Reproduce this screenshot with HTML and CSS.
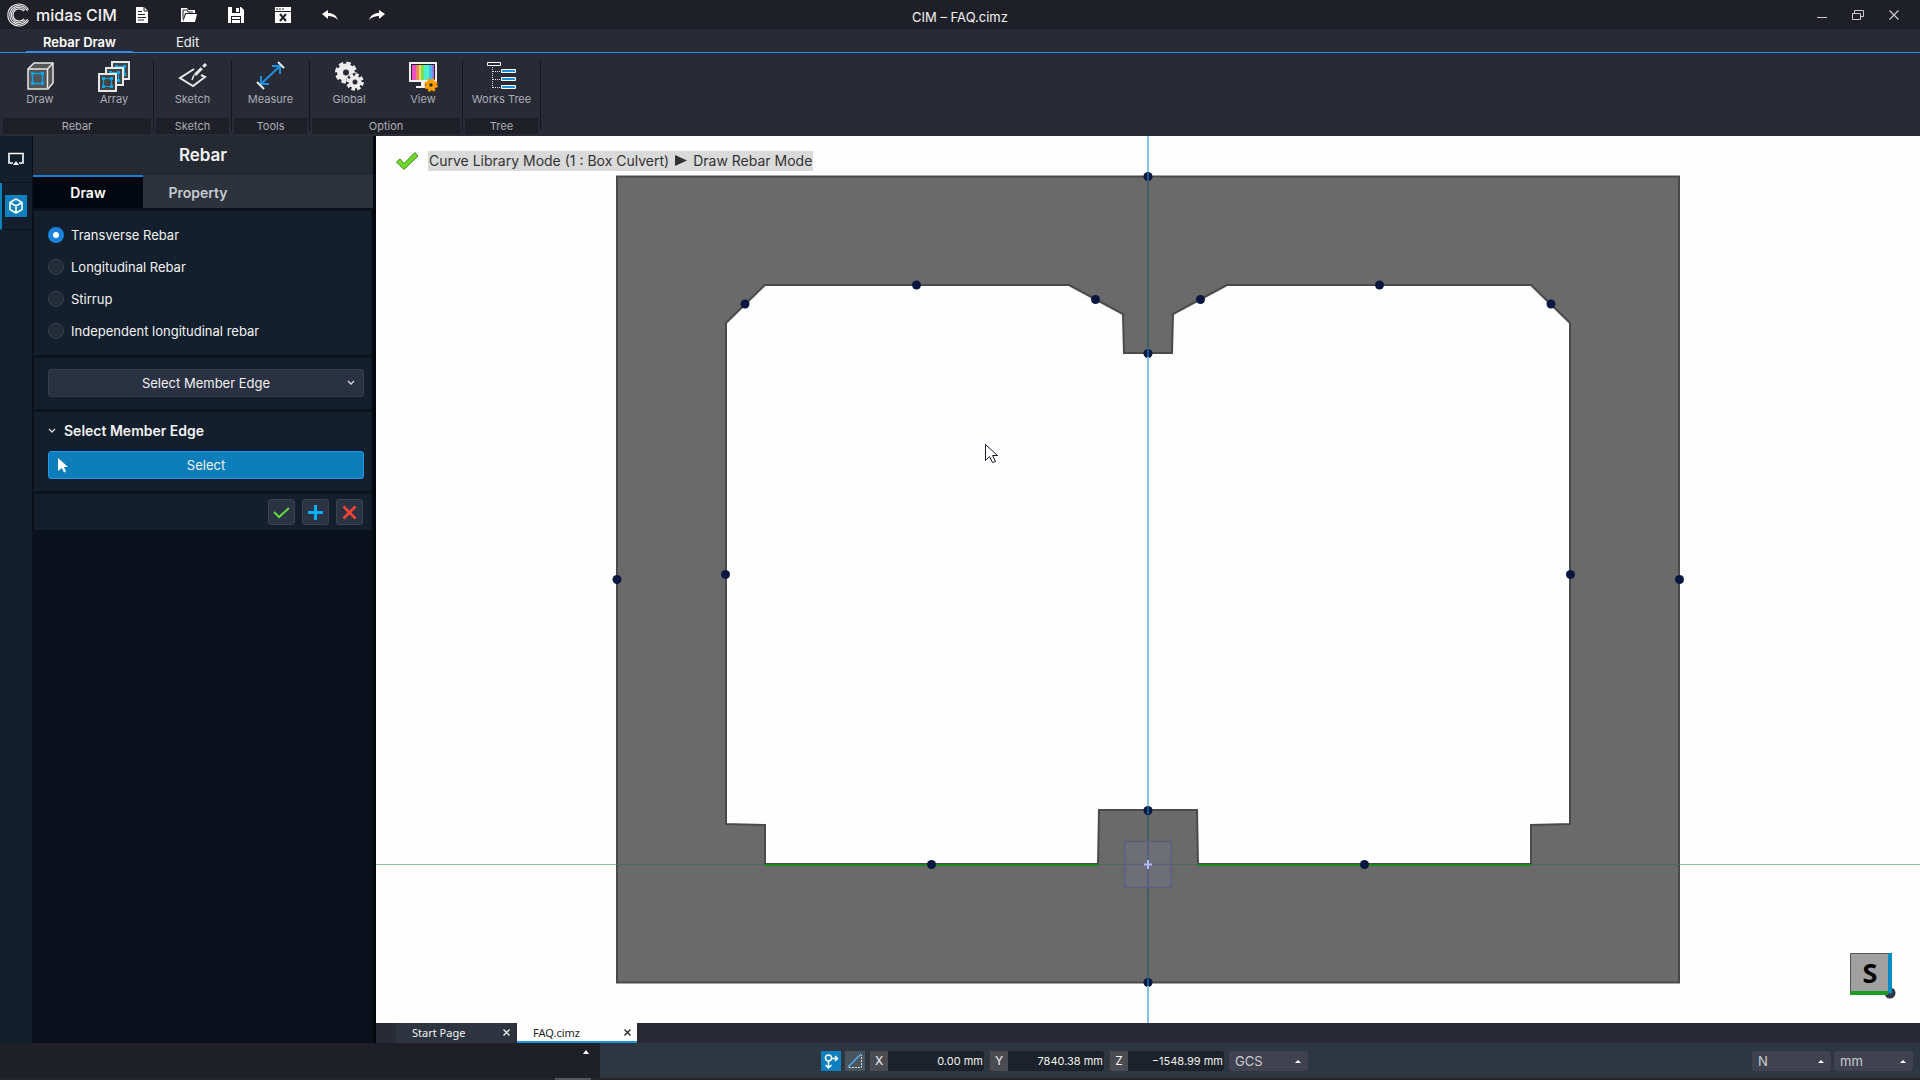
FILE: index.html
```html
<!DOCTYPE html>
<html lang="en">
<head>
    <meta charset="UTF-8">
    <title>CIM – FAQ.cimz</title>
    <link rel="stylesheet" href="styles.css">
</head>
<body>
    <header class="titlebar">
        <div class="brand">
            <svg width="24" height="24" viewBox="0 0 24 24" fill="none" stroke="#f0f0f0">
                <path d="M21.500 6.700A11 11 0 1 0 21.500 17.300" stroke-width="1.100"/>
                <path d="M20.500 8A9.300 9.300 0 1 0 20.500 16" stroke-width="1.100"/>
                <path d="M18.100 7.200A7.700 7.700 0 1 0 18.100 16.800" stroke-width="1.100"/>
                <path d="M16.800 8.200A6.100 6.100 0 1 0 16.800 15.800" stroke-width="1.200"/>
            </svg>
            <span>midas CIM</span>
        </div>
        <div class="quick">
            <button class="quick-btn" aria-label="New">
                <svg width="16" height="16" viewBox="0 0 16 16"><path d="M2 0h8l4 4v12H2z" fill="#fff"/><path d="M10 0v4h4M4 4.500h4M4 7.500h7M4 10.500h8M4 13h6" stroke="#1f2027" fill="none"/></svg>
            </button>
            <button class="quick-btn" aria-label="Open">
                <svg width="16" height="16" viewBox="0 0 16 16"><path d="M0 1h6l1 2h7v3H4L2 13V15H0z" fill="#fff"/><path d="M5 7h11l-2 8H2z" fill="#fff"/><path d="M2 12V3h4l1 2h5" stroke="#1f2027" fill="none"/></svg>
            </button>
            <button class="quick-btn" aria-label="Save">
                <svg width="16" height="16" viewBox="0 0 16 16"><path d="M0 0h13l3 3v13H0z" fill="#fff"/><path d="M4 0h8v6H4zM3 9h10v7H3z" fill="#1f2027"/><path d="M8 1h3v4H8zM4 10h8v2H4zM4 13h8v3H4z" fill="#fff"/></svg>
            </button>
            <button class="quick-btn" aria-label="Close file">
                <svg width="16" height="16" viewBox="0 0 16 16"><path d="M0 0h16v16H0z" fill="#fff"/><path d="M1 2h2M4 2h2M7 2h2M0 4.500h16" stroke="#1f2027"/><path d="M5 7l6 7M11 7l-6 7" stroke="#1f2027" stroke-width="2"/></svg>
            </button>
            <button class="quick-btn" aria-label="Undo">
                <svg width="16" height="16" viewBox="0 0 16 16"><path d="M0 7l6-4v3c5 0 8 2 10 7-3-3-6-4-10-4v3z" fill="#fff"/></svg>
            </button>
            <button class="quick-btn" aria-label="Redo">
                <svg width="16" height="16" viewBox="0 0 16 16"><path d="M16 7l-6-4v3c-5 0-8 2-10 7 3-3 6-4 10-4v3z" fill="#fff"/></svg>
            </button>
        </div>
        <div class="doc-title">CIM – FAQ.cimz</div>
        <div class="window-btns">
            <button class="window-btn" aria-label="Minimize"><svg width="12" height="12" viewBox="0 0 12 12"><path d="M1 8.500h10" stroke="#ccc"/></svg></button>
            <button class="window-btn" aria-label="Restore"><svg width="12" height="12" viewBox="0 0 12 12" fill="none" stroke="#ccc"><path d="M.5 4.500h8v6h-8zM2.500 4.500v-3h9v6h-3"/></svg></button>
            <button class="window-btn" aria-label="Close"><svg width="12" height="12" viewBox="0 0 12 12"><path d="M1.500 1.500l9 9M10.500 1.500l-9 9" stroke="#ccc" stroke-width="1.200"/></svg></button>
        </div>
    </header>

    <nav class="menu">
        <a class="menu-item active" href="#">Rebar Draw</a>
        <a class="menu-item" href="#">Edit</a>
    </nav>

    <div class="ribbon">
        <section class="group">
            <div class="tools">
                <button class="tool">
                    <svg width="32" height="32" viewBox="0 0 32 32"><path d="M4 9L10 3H29V23L24 29H4z" fill="#555" stroke="#e8e8e8" stroke-width="1.500"/><path d="M4 9H23.500V28M23.500 9L29 3" fill="none" stroke="#e8e8e8" stroke-width="1.500"/><path d="M8.500 13.500h10v10h-10z" fill="none" stroke="#0aa5f0" stroke-width="1.500"/><path d="M7 12h3v3H7zM17 12h3v3h-3zM7 22h3v3H7zM17 22h3v3h-3z" fill="#0aa5f0"/></svg>
                    <span>Draw</span>
                </button>
                <button class="tool">
                    <svg width="32" height="32" viewBox="0 0 32 32">
                        <g id="plate"><path d="M14 2h17v17H14z" fill="#444" stroke="#e8e8e8" stroke-width="2"/><path d="M18.500 6.500h8v8h-8z" fill="none" stroke="#0aa5f0"/><path d="M17 5h3v3h-3zM25 5h3v3h-3zM17 13h3v3h-3zM25 13h3v3h-3z" fill="#0aa5f0"/></g>
                        <use href="#plate" x="-6" y="6"/>
                        <use href="#plate" x="-13" y="12"/>
                    </svg>
                    <span>Array</span>
                </button>
            </div>
            <h2 class="group-name">Rebar</h2>
        </section>
        <span class="sep"></span>
        <section class="group">
            <div class="tools">
                <button class="tool">
                    <svg width="32" height="32" viewBox="0 0 32 32" fill="none" stroke="#e8e8e8" stroke-width="2"><path d="M17 9L3 18l13 8 12-9-4-2"/><path d="M15 20l2-5" stroke-width="1.500"/><path d="M18 15L29 4" stroke-width="3"/><path d="M24 6l3 3" stroke="#282b35"/></svg>
                    <span>Sketch</span>
                </button>
            </div>
            <h2 class="group-name">Sketch</h2>
        </section>
        <span class="sep"></span>
        <section class="group">
            <div class="tools">
                <button class="tool">
                    <svg width="32" height="32" viewBox="0 0 32 32" fill="none"><path d="M6 24L25 6M6 16v8h8M17 6h8v8" stroke="#1f8fe0" stroke-width="2"/><path d="M2 22l7 7M23 2l6 6" stroke="#e8e8e8" stroke-width="2"/></svg>
                    <span>Measure</span>
                </button>
            </div>
            <h2 class="group-name">Tools</h2>
        </section>
        <span class="sep"></span>
        <section class="group">
            <div class="tools">
                <button class="tool">
                    <svg width="32" height="32" viewBox="0 0 32 32">
                        <g fill="none" stroke="#ececec"><circle cx="13" cy="12.500" r="6" stroke-width="6"/><circle cx="13" cy="12.500" r="9.500" stroke-width="3" stroke-dasharray="4.500 2.960"/></g>
                        <circle cx="22" cy="22" r="9" fill="#282b35"/>
                        <g fill="none" stroke="#ececec"><circle cx="22" cy="22" r="4.500" stroke-width="4"/><circle cx="22" cy="22" r="7.300" stroke-width="3" stroke-dasharray="3.500 2.230"/></g>
                    </svg>
                    <span>Global</span>
                </button>
                <button class="tool">
                    <svg width="32" height="32" viewBox="0 0 32 32">
                        <path d="M3 3h26v18H3z" fill="#222" stroke="#f0f0f0" stroke-width="2"/>
                        <path d="M5 5h4v15H5z" fill="#f04fc8"/><path d="M9 5h3v15H9z" fill="#e88b5c"/><path d="M12 5h2v15h-2z" fill="#f0d860"/><path d="M14 5h3v15h-3z" fill="#79e050"/><path d="M17 5h5v15h-5z" fill="#4ff0cf"/><path d="M22 5h3v15h-3z" fill="#50b8f0"/><path d="M25 5h2v15h-2z" fill="#9b78e8"/>
                        <path d="M14 22h4v4h2v2H9v-2h5z" fill="#f0f0f0"/>
                        <circle cx="24" cy="25" r="3.500" fill="none" stroke="#ffa000" stroke-width="3.500"/><circle cx="24" cy="25" r="5.500" fill="none" stroke="#ffa000" stroke-width="2.500" stroke-dasharray="2.600 1.720"/>
                    </svg>
                    <span>View</span>
                </button>
            </div>
            <h2 class="group-name">Option</h2>
        </section>
        <span class="sep"></span>
        <section class="group">
            <div class="tools">
                <button class="tool">
                    <svg width="32" height="32" viewBox="0 0 32 32" fill="none"><path d="M1.500 2.500h13v3h-13z" stroke="#fff"/><path d="M6.500 7v21M7 11.500h9M7 19.500h9M7 27.500h9" stroke="#ddd" stroke-dasharray="1 1"/><path d="M15.500 9.500h14v3h-14zM15.500 17.500h14v3h-14zM15.500 25.500h14v3h-14z" fill="#1f8fe0" stroke="#fff"/></svg>
                    <span>Works Tree</span>
                </button>
            </div>
            <h2 class="group-name">Tree</h2>
        </section>
        <span class="sep"></span>
    </div>

    <main class="workspace">
        <aside class="rail">
            <button class="rail-btn" aria-label="Display">
                <svg width="18" height="18" viewBox="0 0 18 18"><path d="M6 13H2V3.500h14V13h-4" fill="none" stroke="#fff" stroke-width="1.600"/><path d="M9 11l3 4H6z" fill="#fff"/></svg>
            </button>
            <button class="rail-btn selected" aria-label="Model">
                <svg width="22" height="22" viewBox="0 0 22 22"><path d="M0 0h22v22H0z" fill="#0d80bd"/><path d="M11 4l6 3.500v7L11 18l-6-3.500v-7zM5 7.500l6 3.500 6-3.500M11 11v7" fill="none" stroke="#fff" stroke-width="1.600"/></svg>
            </button>
        </aside>

        <aside class="panel">
            <h1 class="panel-title">Rebar</h1>
            <div class="panel-tabs">
                <button class="panel-tab active">Draw</button>
                <button class="panel-tab">Property</button>
            </div>
            <form class="sections">
                <div class="section radios">
                    <label class="radio"><input type="radio" name="kind" checked>Transverse Rebar</label>
                    <label class="radio"><input type="radio" name="kind">Longitudinal Rebar</label>
                    <label class="radio"><input type="radio" name="kind">Stirrup</label>
                    <label class="radio"><input type="radio" name="kind">Independent longitudinal rebar</label>
                </div>
                <div class="section method">
                    <select class="wide-select" aria-label="Method"><option>Select Member Edge</option></select>
                    <svg class="method-arrow" width="8" height="6" viewBox="0 0 8 6"><path d="M1 1l3 3 3-3" fill="none" stroke="#ddd" stroke-width="1.300"/></svg>
                </div>
                <div class="section edge">
                    <h3 class="section-title">
                        <svg width="8" height="6" viewBox="0 0 8 6"><path d="M1 1l3 3 3-3" fill="none" stroke="#ddd" stroke-width="1.300"/></svg>
                        Select Member Edge
                    </h3>
                    <button type="button" class="select-btn">
                        <svg width="10" height="15" viewBox="0 0 10 15"><path d="M0 0l10 9H6l2 4.500-2 1L4 10l-4 3z" fill="#fff"/></svg>
                        <span>Select</span>
                    </button>
                </div>
                <div class="section actions">
                    <button type="button" class="action" aria-label="OK"><svg width="17" height="17" viewBox="0 0 17 17"><path d="M1 8l5 5L16 4" fill="none" stroke="#5fdc3c" stroke-width="2"/></svg></button>
                    <button type="button" class="action" aria-label="Apply"><svg width="17" height="17" viewBox="0 0 17 17"><path d="M8.500 1v15M1 8.500h15" stroke="#00b0ff" stroke-width="3"/></svg></button>
                    <button type="button" class="action" aria-label="Cancel"><svg width="17" height="17" viewBox="0 0 17 17"><path d="M2.500 2.500l12 12M14.500 2.500l-12 12" stroke="#ff4433" stroke-width="2.500"/></svg></button>
                </div>
            </form>
        </aside>

        <div class="view">
            <div class="canvas">
                <svg class="model" viewBox="376 136 1544 887">
                    <!-- box culvert section -->
                    <path d="M617 176.500H1679V982.500H617z M765 285L726 323V824L765 825V864H1098L1099 810H1197L1198 864H1531V825L1570 824V323L1531 285H1227L1173 314L1172 353H1124L1123 314L1069 285z" fill="#6a6a6a" fill-rule="evenodd" stroke="#4a4a4a" stroke-width="2"/>
                    <path d="M376 864.500H616M1680 864.500H1920" stroke="#8fc0a0"/>
                    <path d="M616 864.500H1680" stroke="#4e6858"/>
                    <path d="M765 865H1098M1198 865H1531" stroke="#188a1c" stroke-width="2"/>
                    <g fill="#0b1740">
                        <circle cx="1148" cy="176.500" r="4.500"/><circle cx="1148" cy="353.500" r="4.500"/>
                        <circle cx="1148" cy="810.500" r="4.500"/><circle cx="1148" cy="982.500" r="4.500"/>
                        <circle cx="916.500" cy="285" r="4.500"/><circle cx="1379.500" cy="285" r="4.500"/>
                        <circle cx="1095.500" cy="299.500" r="4.500"/><circle cx="1200.500" cy="299.500" r="4.500"/>
                        <circle cx="745" cy="304" r="4.500"/><circle cx="1551" cy="304" r="4.500"/>
                        <circle cx="617" cy="579.500" r="4.500"/><circle cx="1679.500" cy="579.500" r="4.500"/>
                        <circle cx="725.500" cy="574.500" r="4.500"/><circle cx="1570.500" cy="574.500" r="4.500"/>
                        <circle cx="931.500" cy="864.500" r="4.500"/><circle cx="1364.500" cy="864.500" r="4.500"/>
                    </g>
                    <path d="M1148 136V176M1148 353V810M1148 982V1023" stroke="#85c4e4" stroke-width="2"/>
                    <path d="M1148 180V348M1148 815V978" stroke="#435d60" stroke-width="2"/>
                    <path d="M1148 172V180M1148 349V357M1148 806V814M1148 978V986" stroke="#165a8c" stroke-width="2"/>
                    <!-- origin -->
                    <path d="M1125 841.500h46v46h-46zM1125 864.500h46M1148 841v46" fill="#8080b0" fill-opacity=".2" stroke="#5c5e80" stroke-width="1.500"/>
                    <path d="M1144 864.500h8M1148 860v9" stroke="#b4b8ff" stroke-width="2"/>
                    <!-- view cube -->
                    <circle cx="1890" cy="993" r="5.500" fill="#2b3648"/>
                    <path d="M1850.500 953.500h40v40h-40z" fill="#a0a0a0" stroke="#555"/>
                    <path d="M1850 993h38" stroke="#1c9a24" stroke-width="4"/>
                    <path d="M1890 953v40" stroke="#058cc4" stroke-width="4"/>
                    <text class="cube-face" x="1870" y="983" text-anchor="middle">S</text>
                    <!-- pointer -->
                    <path d="M985.500 444.500v16l4-4 3 6 3-1-3-6h5z" fill="#fff" stroke="#1c1c30"/>
                </svg>
                <div class="mode">
                    <svg width="24" height="20" viewBox="0 0 24 20"><path d="M1.500 11L5 8l4 4.500L20 1.500 23 5 9 18.500z" fill="#70d82c" stroke="#3f8a1c"/></svg>
                    <span class="mode-text">Curve Library Mode (1 : Box Culvert) <svg width="12" height="11" viewBox="0 0 12 11"><path d="M0 0l12 5.500L0 11z" fill="#333"/></svg> Draw Rebar Mode</span>
                </div>
            </div>
            <div class="doc-tabs">
                <div class="doc-tab"><span>Start Page</span><button class="doc-close" aria-label="Close Start Page"><svg width="7" height="7" viewBox="0 0 7 7"><path d="M.5.5l6 6M6.500.5l-6 6" stroke="currentColor" stroke-width="1.300"/></svg></button></div>
                <div class="doc-tab current"><span>FAQ.cimz</span><button class="doc-close" aria-label="Close FAQ.cimz"><svg width="7" height="7" viewBox="0 0 7 7"><path d="M.5.5l6 6M6.500.5l-6 6" stroke="currentColor" stroke-width="1.300"/></svg></button></div>
            </div>
        </div>
    </main>

    <footer class="status">
        <div class="log"><svg width="6" height="4" viewBox="0 0 6 4"><path d="M3 0l3 4H0z" fill="#fff"/></svg><span class="log-thumb"></span></div>
        <div class="coords">
            <button class="snap on" aria-label="Snap"><svg width="20" height="20" viewBox="0 0 20 20" fill="none" stroke="#fff" stroke-width="1.500"><circle cx="7.500" cy="7" r="3"/><path d="M7.500 10v7M4.500 14l3 3 3-3M10.500 7.500H16M14 5l2.500 2.500L14 10"/></svg></button>
            <button class="snap" aria-label="Plane"><svg width="20" height="20" viewBox="0 0 20 20" fill="none"><path d="M3 16L16 3" stroke="#4fb0f0" stroke-width="1.500"/><path d="M4 16.500h12.500V4" stroke="#ddd" stroke-dasharray="2 1"/></svg></button>
            <div class="coord"><label for="cx">X</label><input id="cx" value="0.00 mm"></div>
            <div class="coord"><label for="cy">Y</label><input id="cy" value="7840.38 mm"></div>
            <div class="coord"><label for="cz">Z</label><input id="cz" value="−1548.99 mm"></div>
            <div class="drop"><select aria-label="Coordinate system"><option>GCS</option></select></div>
        </div>
        <div class="units">
            <div class="drop"><select aria-label="Force unit"><option>N</option></select></div>
            <div class="drop"><select aria-label="Length unit"><option>mm</option></select></div>
        </div>
    </footer>
</body>
</html>
```
FILE: styles.css
```css
* {
    box-sizing: border-box;
}

body {
    margin: 0;
    height: 100vh;
    display: flex;
    flex-direction: column;
    overflow: hidden;
    background-color: #282b35;
    color: #f2f2f2;
    font-family: Inter, "Liberation Sans", sans-serif;
    font-size: 13px;
}

button, select, input {
    font: inherit;
    color: inherit;
    margin: 0;
    padding: 0;
    border: none;
    background: none;
}

svg {
    display: block;
    flex: none;
}

h1, h2, h3 {
    margin: 0;
}

/* title bar */
.titlebar {
    display: grid;
    grid-template-columns: 1fr auto 1fr;
    align-items: center;
    height: 29px;
    background-color: #1f2027;
}

.brand {
    grid-column: 1;
    grid-row: 1;
    display: flex;
    align-items: center;
    gap: 5px;
    padding-left: 7px;
    font-size: 16px;
    font-weight: 500;
}

.quick {
    grid-column: 1;
    grid-row: 1;
    display: flex;
    padding-left: 118px;
}

.quick-btn {
    width: 47px;
    height: 28px;
    display: flex;
    align-items: center;
    justify-content: center;
}

.doc-title {
    grid-column: 2;
    grid-row: 1;
    padding-top: 4px;
}

.window-btns {
    grid-column: 3;
    grid-row: 1;
    display: flex;
    justify-content: flex-end;
    padding-right: 8px;
}

.window-btn {
    width: 36px;
    height: 28px;
    display: flex;
    align-items: center;
    justify-content: center;
}

/* menu */
.menu {
    display: flex;
    gap: 26px;
    height: 24px;
    padding-left: 26px;
    border-bottom: 1px solid #2f8fee;
}

.menu-item {
    padding: 0 17px;
    color: #f2f2f2;
    line-height: 26px;
    text-decoration: none;
}

.menu-item.active {
    font-weight: 600;
    color: #fff;
    border-bottom: 1px solid #2f8fee;
}

/* ribbon */
.ribbon {
    display: flex;
    height: 83px;
    padding: 7px 0 2px 1px;
}

.group {
    display: flex;
    flex-direction: column;
    justify-content: space-between;
    padding: 0 2px;
}

.tools {
    display: flex;
}

.tool {
    width: 74px;
    display: flex;
    flex-direction: column;
    align-items: center;
    color: #a9adb5;
    font-size: 11px;
    line-height: 14px;
}

.tool:only-child {
    width: 73px;
}

.group-name {
    height: 16px;
    background-color: #1f2027;
    color: #a9adb5;
    font-size: 11px;
    font-weight: normal;
    line-height: 16px;
    text-align: center;
}

.sep {
    width: 1px;
    height: 71px;
    background-color: #14161d;
}

/* workspace */
.workspace {
    flex: 1;
    min-height: 0;
    display: flex;
}

.rail {
    width: 32px;
    background-color: #131f2d;
}

.rail-btn {
    display: flex;
    align-items: center;
    justify-content: center;
    width: 32px;
    height: 47px;
    border-bottom: 1px solid #0d141f;
}

.rail-btn.selected {
    border-left: 2px solid #0d80bd;
    padding-right: 2px;
}

.panel {
    width: 344px;
    background-color: #0b121d;
    border-left: 1px solid #0a0f18;
    border-right: 3px solid #03070e;
}

.panel-title {
    height: 39px;
    background-color: #252932;
    font-size: 17px;
    font-weight: 600;
    line-height: 39px;
    text-align: center;
}

.panel-tabs {
    display: flex;
    height: 33px;
    background-color: #2d333d;
}

.panel-tab {
    width: 110px;
    font-size: 14px;
    font-weight: 600;
    color: #c8cacf;
    border-top: 2px solid transparent;
}

.panel-tab.active {
    background-color: #030810;
    border-top-color: #1a7fd0;
    color: #fff;
}

.sections {
    display: flex;
    flex-direction: column;
    gap: 3px;
    padding: 3px 2px 0 1px;
}

.section {
    background-color: #131f2c;
    padding: 11px 7px 12px 14px;
}

.radios {
    padding-top: 8px;
    padding-bottom: 8px;
}

.radio {
    display: flex;
    align-items: center;
    gap: 7px;
    height: 32px;
}

.radio input {
    appearance: none;
    width: 16px;
    height: 16px;
    border: 1px solid #363d4b;
    border-radius: 50%;
    background-color: #252c39;
}

.radio input:checked {
    border: 5px solid #1a84dc;
    background-color: #fff;
}

.method {
    position: relative;
}

.wide-select {
    appearance: none;
    display: block;
    width: 100%;
    height: 28px;
    background-color: #293142;
    border: 1px solid #353d4d;
    border-radius: 3px;
    text-align: center;
    text-align-last: center;
}

.method-arrow {
    position: absolute;
    right: 16px;
    top: 22px;
}

.section-title {
    display: flex;
    align-items: center;
    gap: 8px;
    height: 15px;
    margin-bottom: 13px;
    font-size: 14px;
    font-weight: 600;
}

.select-btn {
    display: grid;
    grid-template-columns: 1fr auto 1fr;
    align-items: center;
    width: 100%;
    height: 28px;
    padding: 0 9px;
    background-color: #0d7eba;
    border: 1px solid #2795ee;
    border-radius: 3px;
}

.actions {
    display: flex;
    justify-content: flex-end;
    gap: 7px;
    padding: 5px 8px;
}

.action {
    display: flex;
    align-items: center;
    justify-content: center;
    width: 27px;
    height: 26px;
    background-color: #2b3344;
    border: 1px solid #3a4252;
    border-radius: 3px;
}

/* drawing area */
.view {
    flex: 1;
    min-width: 0;
    display: flex;
    flex-direction: column;
}

.canvas {
    flex: 1;
    min-height: 0;
    position: relative;
    background-color: #fefefe;
}

.model {
    width: 100%;
    height: 100%;
}

.cube-face {
    font-family: "Noto Sans", sans-serif;
    font-size: 27px;
    font-weight: bold;
}

.mode {
    position: absolute;
    left: 19px;
    top: 15px;
    display: flex;
    align-items: center;
    gap: 9px;
}

.mode-text {
    display: flex;
    align-items: center;
    gap: 6px;
    height: 20px;
    padding: 0 1px 1px;
    background-color: #dadada;
    color: #333;
    font-size: 14px;
}

.doc-tabs {
    display: flex;
    gap: 1px;
    height: 20px;
    padding-left: 20px;
    font-family: "Noto Sans", sans-serif;
    font-size: 11px;
}

.doc-tab {
    display: flex;
    align-items: center;
    justify-content: space-between;
    width: 120px;
    padding: 0 6px 0 16px;
    background-color: #2d343f;
    border-bottom: 2px solid #2d343f;
}

.doc-tab.current {
    background-color: #fefefe;
    color: #222;
    border-bottom-color: #1c95dc;
}

/* status bar */
.status {
    display: flex;
    height: 37px;
    background-color: #2e3641;
    border-bottom: 2px solid #25262b;
}

.log {
    width: 600px;
    position: relative;
    display: flex;
    justify-content: flex-end;
    padding: 7px 11px;
    background-color: #1f2027;
}

.log-thumb {
    position: absolute;
    right: 9px;
    bottom: -2px;
    width: 36px;
    height: 2px;
    background-color: #55565a;
}

.coords, .units {
    display: flex;
    align-items: center;
    height: 20px;
    margin-top: 8px;
}

.coords {
    margin-left: 221px;
}

.snap {
    width: 20px;
    height: 20px;
    margin-right: 4px;
    background-color: #4a545c;
}

.snap.on {
    background-color: #0d80bd;
}

.coord {
    display: flex;
    width: 114px;
    height: 20px;
    margin: 0 5px 0 1px;
}

.coord label {
    width: 18px;
    background-color: #4a4c52;
    font-size: 12px;
    line-height: 20px;
    text-align: center;
}

.coord input {
    flex: 1;
    min-width: 0;
    background-color: #1c2229;
    border-radius: 0 3px 3px 0;
    font-size: 11px;
    text-align: right;
    padding-right: 1px;
}

.drop {
    position: relative;
    width: 79px;
}

.drop::after {
    content: "";
    position: absolute;
    right: 7px;
    top: 9px;
    border: 3px solid transparent;
    border-top: none;
    border-bottom: 3px solid #fff;
}

.drop select {
    appearance: none;
    display: block;
    width: 100%;
    height: 20px;
    padding-left: 6px;
    background-color: #40434f;
    border-radius: 3px;
    color: #c9cdd3;
    font-size: 13px;
}

.units {
    gap: 3px;
    margin-left: auto;
    padding-right: 7px;
}
```
